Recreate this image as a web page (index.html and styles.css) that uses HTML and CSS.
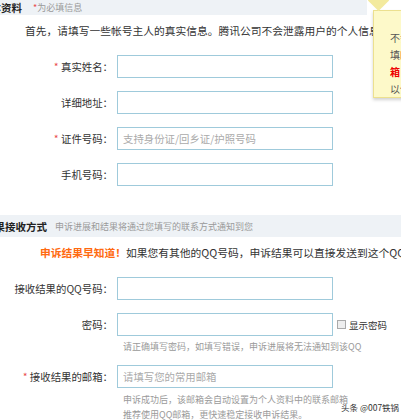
FILE: index.html
```html
<!DOCTYPE html>
<html lang="zh-CN">
<head>
<meta charset="utf-8">
<title>申诉</title>
<link rel="stylesheet" href="styles.css">
</head>
<body>
<div class="page">
  <div class="bar bar1">
    <b class="bar-title title1">基本资料</b>
    <span class="bar-note"><i class="req">*</i>为必填信息</span>
  </div>
  <p class="intro">首先，请填写一些帐号主人的真实信息。腾讯公司不会泄露用户的个人信息。</p>

  <div class="form form1">
    <div class="row">
      <label class="label"><i class="req">*</i> 真实姓名：</label>
      <input class="field" type="text">
    </div>
    <div class="row">
      <label class="label">详细地址：</label>
      <input class="field" type="text">
    </div>
    <div class="row">
      <label class="label"><i class="req">*</i> 证件号码：</label>
      <input class="field" type="text" placeholder="支持身份证/回乡证/护照号码">
    </div>
    <div class="row">
      <label class="label">手机号码：</label>
      <input class="field" type="text">
    </div>
  </div>

  <div class="bar bar2">
    <b class="bar-title title2">结果接收方式</b>
    <span class="bar-note">申诉进展和结果将通过您填写的联系方式通知到您</span>
  </div>
  <p class="notice"><b class="orange">申诉结果早知道！</b>如果您有其他的QQ号码，申诉结果可以直接发送到这个QQ号码上。</p>

  <div class="form form2">
    <div class="row">
      <label class="label">接收结果的QQ号码：</label>
      <input class="field" type="text">
    </div>
    <div class="row row-pw">
      <label class="label">密码：</label>
      <input class="field" type="password">
      <span class="show-pw"><span class="box"></span>显示密码</span>
    </div>
    <p class="hint hint-pw">请正确填写密码，如填写错误，申诉进展将无法通知到该QQ</p>
    <div class="row row-mail">
      <label class="label"><i class="req">*</i> 接收结果的邮箱：</label>
      <input class="field" type="text" placeholder="请填写您的常用邮箱">
    </div>
    <p class="hint hint-mail">申诉成功后，该邮箱会自动设置为个人资料中的联系邮箱<br>推荐使用QQ邮箱，更快速稳定接收申诉结果。</p>
  </div>
</div>

<div class="tip">
  <p class="tip-line">不会泄露</p>
  <p class="tip-line">填<span class="red">邮</span>箱</p>
  <p class="tip-line"><b class="red">箱</b> 地</p>
  <p class="tip-line">以便</p>
</div>

<div class="watermark">头条 @007铁锅</div>
</body>
</html>
```

FILE: styles.css
```css
html, body {
  margin: 0;
  padding: 0;
}
body {
  width: 401px;
  height: 420px;
  overflow: hidden;
  position: relative;
  background: #fff;
  font-family: "Noto Sans CJK SC", "Noto Sans", sans-serif;
  font-size: 10.4px;
  color: #333;
}
p { margin: 0; }
i { font-style: normal; }

.page {
  display: flex;
  flex-direction: column;
  white-space: nowrap;
}

.bar {
  display: flex;
  align-items: center;
  background: #eef2f6;
  overflow: hidden;
}
.bar1 {
  width: 367px;
  height: 15px;
}
.bar2 {
  height: 22px;
  margin-top: 29px;
}
.bar-title {
  font-size: 10.5px;
  font-weight: bold;
  color: #222;
}
.title1 { margin-left: -20px; }
.title2 { margin-left: -16px; }
.bar-note {
  font-size: 9px;
  color: #9a9a9a;
}
.bar1 .bar-note { margin-left: 11px; }
.bar2 .bar-note { margin-left: 8px; }

.req { color: #e94b4b; }

.intro {
  margin-top: 8px;
  line-height: 16px;
  padding-left: 25px;
  font-size: 10.75px;
}

.form {
  display: flex;
  flex-direction: column;
}
.form1 {
  margin-top: 16px;
  gap: 13px;
}
.form2 {
  margin-top: 16px;
}

.row {
  display: grid;
  grid-template-columns: 113px 216px auto;
  column-gap: 4px;
  align-items: center;
  height: 23px;
}
.label {
  text-align: right;
  line-height: 14px;
}
.field {
  box-sizing: border-box;
  width: 216px;
  height: 23px;
  margin: 0;
  padding: 0 5px;
  border: 1px solid #9fcadb;
  background: #fff;
  font-family: inherit;
  font-size: 10.4px;
  color: #333;
  outline: none;
}
.field::placeholder {
  color: #aaa;
}

.row-pw { margin-top: 13px; }
.show-pw {
  display: flex;
  align-items: center;
  font-size: 9.5px;
  color: #333;
}
.box {
  width: 7px;
  height: 7px;
  border: 1px solid #aaa;
  background: #eee;
  margin-right: 3px;
}

.hint {
  font-size: 9px;
  color: #9a9a9a;
  padding-left: 123px;
}
.hint-pw {
  margin-top: 5px;
  line-height: 12px;
}
.row-mail { margin-top: 12px; }
.hint-mail {
  margin-top: 4px;
  line-height: 15px;
}

.notice {
  margin-top: 8px;
  line-height: 16px;
  padding-left: 40px;
  font-size: 10.75px;
}
.orange {
  color: #ff6a10;
  font-size: 10.75px;
}

.tip {
  position: absolute;
  left: 373px;
  top: 10px;
  width: 70px;
  height: 88px;
  box-sizing: border-box;
  padding: 18px 0 0 16px;
  background: #fdf9c9;
  border: 1px solid #ece08f;
  box-shadow: 0 2px 3px rgba(0, 0, 0, 0.18);
  font-size: 10px;
  color: #555;
  white-space: nowrap;
}
.tip::before {
  content: "";
  position: absolute;
  left: -3px;
  top: -18px;
  width: 15px;
  height: 15px;
  background: #f3ea9e;
  transform: rotate(45deg);
}
.tip-line {
  line-height: 17px;
}
.red { color: #e00; }

.watermark {
  position: absolute;
  left: 341px;
  top: 401px;
  font-size: 8.5px;
  line-height: 12px;
  color: #333;
  white-space: nowrap;
  text-shadow: 0 0 2px #fff;
}
```
